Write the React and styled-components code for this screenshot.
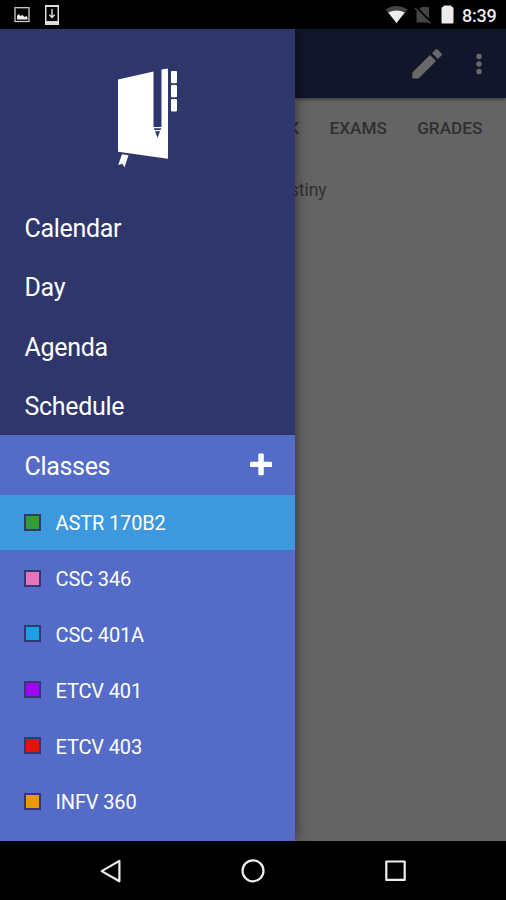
import React from "react";
import styled, { createGlobalStyle } from "styled-components";

const GlobalStyle = createGlobalStyle`
  * { box-sizing: border-box; }
  body { margin: 0; background: #000; font-family: Roboto, sans-serif; }
`;

const Screen = styled.div`
  display: flex;
  flex-direction: column;
  width: 506px;
  height: 900px;
  overflow: hidden;
  background: #000;
`;

const StatusBar = styled.header`
  display: flex;
  align-items: center;
  justify-content: space-between;
  flex: none;
  height: 29px;
  padding: 0 9px 0 14px;
  color: #ececec;
`;

const StatusGroup = styled.div`
  display: flex;
  align-items: center;
  gap: ${(p) => p.$gap}px;
  height: 29px;
`;

const Clock = styled.span`
  width: 35px;
  padding-top: 2px;
  font-size: 18px;
  font-weight: 500;
  line-height: 29px;
  letter-spacing: -0.25px;
`;

const Body = styled.div`
  display: flex;
  flex: none;
  height: 812px;
`;

const Drawer = styled.aside`
  display: flex;
  flex-direction: column;
  flex: none;
  width: 295px;
  background: #546cc8;
  color: #fff;
  z-index: 1;
  box-shadow: 1px 0 12px rgba(0, 0, 0, 0.45);
  clip-path: inset(0 -20px 0 0);
`;

const DrawerTop = styled.div`
  flex: none;
  height: 406px;
  background: #2f366c;
`;

const LogoArea = styled.div`
  display: flex;
  justify-content: center;
  height: 168px;
  padding-top: 36px;
`;

const MenuRow = styled.div`
  display: flex;
  align-items: center;
  justify-content: space-between;
  flex: none;
  height: 59.5px;
  padding: 0 23px 0 24.5px;
  font-size: 25px;
  line-height: 30px;
  letter-spacing: -0.32px;
`;

const MenuLabel = styled.span`
  padding-top: 3.5px;
`;

const ClassRow = styled.div`
  display: flex;
  align-items: center;
  flex: none;
  height: 55.8px;
  padding: 0 24px;
  gap: 14.5px;
  font-size: 20px;
  line-height: 24px;
  letter-spacing: -0.14px;
  background: ${(p) => (p.$active ? "#3d98dd" : "transparent")};
`;

const Swatch = styled.span`
  width: 17px;
  height: 17px;
  border: 2px solid #2f3974;
  background: ${(p) => p.$color};
`;

const ClassName = styled.span`
  padding-top: 2px;
`;

const Page = styled.main`
  flex: 1;
  min-width: 0;
  background: #646464;
  color: #303030;
`;

const AppBar = styled.div`
  display: flex;
  align-items: center;
  justify-content: flex-end;
  height: 69px;
  background: #12162b;
  box-shadow: 0 1px 4px rgba(0, 0, 0, 0.5);
`;

const Tabs = styled.nav`
  display: flex;
  justify-content: flex-end;
  gap: 30.3px;
  height: 60px;
  padding-right: 23.6px;
  font-size: 17.2px;
  font-weight: 500;
  line-height: 61px;
`;

const Detail = styled.div`
  display: flex;
  justify-content: flex-end;
  width: 31.6px;
  margin-top: 20px;
  font-size: 17.5px;
  line-height: 24px;
`;

const NavBar = styled.footer`
  display: flex;
  align-items: center;
  justify-content: space-between;
  flex: none;
  height: 59px;
  padding: 0 98px;
`;

const PictureIcon = () => (
  <svg width="16" height="29" viewBox="0 0 16 29">
    <rect x="1" y="7.700" width="14" height="13.800" fill="none" stroke="#ccc" strokeWidth="1.300" />
    <path d="M3 19.500V16l1.500-2 2 2 2-1 2 2 2-1 1 1.500v2z" fill="#eee" />
  </svg>
);

const DownloadIcon = () => (
  <svg width="14" height="29" viewBox="0 0 14 29">
    <path fillRule="evenodd" d="M0 5h14v20H0zM1.500 7v14h11V7z" fill="#ddd" />
    <path d="M7 9v8.500M4.300 14.700 7 17.500l2.700-2.800" fill="none" stroke="#ddd" strokeWidth="1.400" />
  </svg>
);

const StatusIcons = () => (
  <svg width="70" height="29" viewBox="385 0 70 29">
    <path d="M385.500 9.400Q396.500 2.500 407.500 9.400L396.500 23z" fill="#444" />
    <path d="M388.200 12.600Q396.500 8.200 404.800 12.600L396.500 23z" fill="#ececec" />
    <path d="M416.500 11.500 421.500 7H428q1 0 1 1v14.500H416.500z" fill="#444" />
    <path d="M415.500 7 431 22.500" stroke="#000" strokeWidth="2.500" />
    <path d="M415 8 430.500 23.500" stroke="#4b4b4b" strokeWidth="1.300" />
    <path d="M443.500 7v-1.500h8V7h1q1 0 1 1v14.500q0 1-1 1h-10q-1 0-1-1V8q0-1 1-1z" fill="#ececec" />
  </svg>
);

const NotebookLogo = () => (
  <svg width="62" height="104" viewBox="117 65 62 104" fill="#fff">
    <path d="M118 79.500 153.500 71.500V127H161.500V69.500L168 68.500V158.800L118 151.800z" />
    <path d="M153.800 128.200h7.500l-.8 1.900h-5.900z" fill="#2f366c" />
    <path d="M155 131.300h5l-2.400 6.500z" fill="#2f366c" />
    <rect x="171" y="71" width="6" height="12.300" rx="1" />
    <rect x="171" y="85" width="6" height="12.200" rx="1" />
    <rect x="171" y="99" width="6" height="12.500" rx="1" />
    <path d="M122 154.200 128.500 155.200 124.500 167.200 122.300 163.700 118.200 165z" />
  </svg>
);

const PlusIcon = () => (
  <svg width="22" height="24" viewBox="0 -1 22 24" fill="#fff">
    <rect x="8.300" y="-0.500" width="5.500" height="21.700" rx="1.200" />
    <rect x="0" y="7.700" width="22" height="5.400" rx="1.200" />
  </svg>
);

const AppBarActions = () => (
  <svg width="100" height="69" viewBox="406 29 100 69" fill="#686868">
    <path d="M412.300 72.500V78.500H418.500L436 61 430 55z" />
    <path d="M432 53.200 435.600 49.600q1-1 2 0L441.500 53.500q1 1 0 2L437.900 59.100z" />
    <circle cx="479" cy="56.500" r="2.700" />
    <circle cx="479" cy="64" r="2.700" />
    <circle cx="479" cy="71.500" r="2.700" />
  </svg>
);

const BackIcon = () => (
  <svg width="24" height="26" viewBox="98 857.500 24 26" fill="none" stroke="#eee" strokeWidth="2.200" strokeLinejoin="round">
    <path d="M119.400 860.400V880.800L101.700 870.600z" />
  </svg>
);

const HomeIcon = () => (
  <svg width="24" height="24" viewBox="0 0 24 24" fill="none" stroke="#eee" strokeWidth="2.200">
    <circle cx="12" cy="11.800" r="10.500" />
  </svg>
);

const RecentsIcon = () => (
  <svg width="24" height="24" viewBox="0 0 24 24" fill="none" stroke="#eee" strokeWidth="2.200" strokeLinejoin="round">
    <rect x="2.300" y="2.500" width="18.400" height="18.400" />
  </svg>
);

const views = ["Calendar", "Day", "Agenda", "Schedule"];

const classes = [
  ["ASTR 170B2", "#339c33"],
  ["CSC 346", "#e773b8"],
  ["CSC 401A", "#1ba1e2"],
  ["ETCV 401", "#a200ff"],
  ["ETCV 403", "#e51400"],
  ["INFV 360", "#f09609"],
];

export default function App() {
  return (
    <Screen>
      <GlobalStyle />
      <StatusBar>
        <StatusGroup $gap={15}><PictureIcon /><DownloadIcon /></StatusGroup>
        <StatusGroup $gap={7}><StatusIcons /><Clock>8:39</Clock></StatusGroup>
      </StatusBar>
      <Body>
        <Drawer>
          <DrawerTop>
            <LogoArea><NotebookLogo /></LogoArea>
            {views.map((label) => (
              <MenuRow key={label}><MenuLabel>{label}</MenuLabel></MenuRow>
            ))}
          </DrawerTop>
          <MenuRow><MenuLabel>Classes</MenuLabel><PlusIcon /></MenuRow>
          {classes.map(([name, color], i) => (
            <ClassRow key={name} $active={i === 0}>
              <Swatch $color={color} />
              <ClassName>{name}</ClassName>
            </ClassRow>
          ))}
        </Drawer>
        <Page>
          <AppBar><AppBarActions /></AppBar>
          <Tabs><span>K</span><span>EXAMS</span><span>GRADES</span></Tabs>
          <Detail>stiny</Detail>
        </Page>
      </Body>
      <NavBar><BackIcon /><HomeIcon /><RecentsIcon /></NavBar>
    </Screen>
  );
}
